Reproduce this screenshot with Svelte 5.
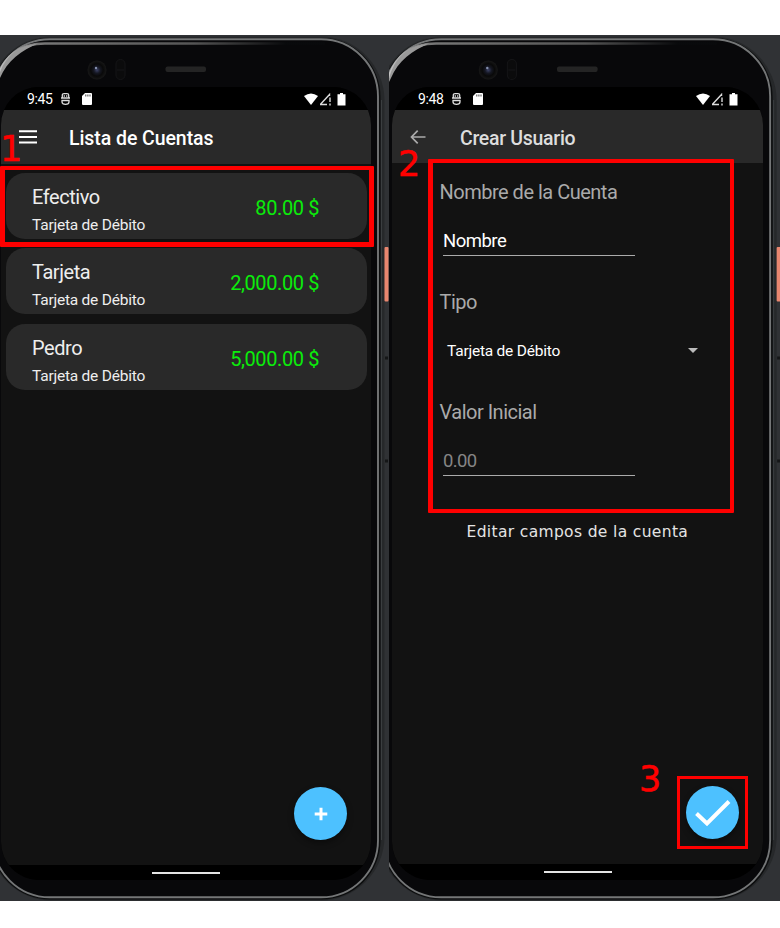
<script>
  const accounts = [
    { name: 'Efectivo', type: 'Tarjeta de Débito', amount: '80.00 $' },
    { name: 'Tarjeta', type: 'Tarjeta de Débito', amount: '2,000.00 $' },
    { name: 'Pedro', type: 'Tarjeta de Débito', amount: '5,000.00 $' }
  ];
</script>

{#snippet body(id)}
  <svg class="hardware" width="391" height="866" viewBox="0 35 391 866" aria-hidden="true">
    <defs>
      <linearGradient id="glow-{id}" x1="0" x2="1" y1="0" y2="0">
        <stop offset="0" stop-color="#c6c6c6" />
        <stop offset=".12" stop-color="#777" />
        <stop offset=".6" stop-color="#555" />
        <stop offset=".88" stop-color="#090a0c" />
      </linearGradient>
      <radialGradient id="lens-{id}">
        <stop offset="0" stop-color="#3c4266" />
        <stop offset=".35" stop-color="#151722" />
        <stop offset=".65" stop-color="#090909" />
        <stop offset="1" stop-color="#171717" />
      </radialGradient>
    </defs>
    <rect x="-12" y="36.5" width="396.500" height="864" rx="64" fill="#26282a" />
    <rect x="-9" y="38" width="389.500" height="861.500" rx="59" fill="#0c0d0e" />
    <rect x="-7" y="39.300" width="385" height="858" rx="57" fill="#08080a" stroke="#747677" stroke-width="1.900" />
    <path d="M-3 80C3 57 19 43.500 45 43.500H325" fill="none" stroke="url(#glow-{id})" stroke-width="2.500" />
    <path d="M-3 84C1 60 15 46 38 43.500C22 50 7 61 0 78Z" fill="#999" />
    <path d="M381.500 100V840" stroke="#3b3e40" />
    <circle cx="97" cy="70" r="9.500" fill="url(#lens-{id})" />
    <circle cx="96" cy="68" r="1.200" fill="#8791ae" />
    <rect x="116" y="59.500" width="9" height="20" rx="4.500" fill="#0b0b0c" stroke="#151517" />
    <path d="M117 70h7" stroke="#171719" />
    <rect x="165.500" y="66.500" width="40.500" height="5.500" rx="2" fill="#242424" />
    <rect x="384.500" y="247" width="4" height="54.500" rx="1" fill="#e9866f" />
    <path d="M385 358h3M385 461h3" stroke="#151617" stroke-width="3" />
  </svg>
{/snippet}

{#snippet statusbar(time)}
  <div class="status">
    <span class="time">{time}</span>
    <svg width="9" height="12" viewBox="0 0 9 12" fill="none" stroke="#ddd" stroke-width="1.300">
      <path d="M1.300 4.500V2Q1.300.7 3 .7H6Q7.700.7 7.700 2V4.500M0 5H9M1 7.500H8V9Q8 11.300 4.500 11.300Q1 11.300 1 9Z" />
      <path d="M3.300 2.300v1.500M5.700 2.300v1.500" />
    </svg>
    <svg class="sd" width="10" height="12" viewBox="0 0 10 12"><path d="M3 0H9Q10 0 10 1V11Q10 12 9 12H1Q0 12 0 11V3Z" fill="#fff" /><path d="M3.800 1.500v2M5.900 1.500v2M8 1.500v2" stroke="#444" /></svg>
    <svg class="signals" width="42" height="13" viewBox="0 0 42 13">
      <path d="M0 3Q7-2 14 3L7 12Z" fill="#fff" />
      <path d="M16 11.500H23M16.500 11.200L25.500 1.500V3" fill="none" stroke="#ddd" stroke-width="1.400" />
      <path d="M26 4.500V9M26 10.500v2" stroke="#ddd" stroke-width="1.400" />
      <path d="M36 0H39V1.200H41.500V12.500H33.500V1.200H36Z" fill="#fff" />
    </svg>
  </div>
{/snippet}

<main>
  <section class="phone">
    {@render body('list')}
    <div class="screen">
      {@render statusbar('9:45')}
      <header>
        <svg class="nav" width="18" height="14" viewBox="0 0 18 14"><path d="M0 1.300H18M0 6.900H18M0 12.500H18" stroke="#fff" stroke-width="2" /></svg>
        <h1>Lista de Cuentas</h1>
      </header>
      <div class="content list">
        {#each accounts as account}
          <article>
            <div>
              <h2>{account.name}</h2>
              <p>{account.type}</p>
            </div>
            <strong>{account.amount}</strong>
          </article>
        {/each}
        <button class="fab" aria-label="Agregar cuenta">
          <svg width="14" height="14" viewBox="0 0 14 14"><path d="M7 .7V13.300M.7 7H13.300" stroke="#fff" stroke-width="3" /></svg>
        </button>
      </div>
      <footer><i></i></footer>
    </div>
    <b class="num one">1</b>
    <div class="mark first"></div>
  </section>

  <section class="phone second">
    {@render body('form')}
    <div class="screen">
      {@render statusbar('9:48')}
      <header>
        <svg class="nav" width="16" height="14" viewBox="0 0 16 14"><path d="M15.500 7H1.500M7.700.7L1.500 7L7.700 13.300" fill="none" stroke="#aaa" stroke-width="1.700" /></svg>
        <h1>Crear Usuario</h1>
      </header>
      <div class="content form">
        <div class="label">Nombre de la Cuenta</div>
        <div class="field">Nombre</div>
        <div class="label">Tipo</div>
        <div class="select">
          <span>Tarjeta de Débito</span>
          <svg width="10" height="5" viewBox="0 0 10 5"><path d="M0 0H10L5 5Z" fill="#bbb" /></svg>
        </div>
        <div class="label">Valor Inicial</div>
        <div class="field empty">0.00</div>
        <div class="caption">Editar campos de la cuenta</div>
        <button class="fab" aria-label="Guardar">
          <svg width="36" height="28" viewBox="0 0 36 28"><path d="M1.500 14.500L12 24.500L34 2.500" fill="none" stroke="#fff" stroke-width="4" /></svg>
        </button>
      </div>
      <footer><i></i></footer>
    </div>
    <b class="num two">2</b>
    <b class="num three">3</b>
    <div class="mark fields"></div>
    <div class="mark save"></div>
  </section>
</main>

<style>
  :global(body) { margin: 0; background: #fff; }
  main {
    box-sizing: border-box;
    width: 780px;
    height: 928px;
    padding: 35px 0 27px;
    display: grid;
    grid-template-columns: 389px 391px;
    overflow: hidden;
    font-family: Roboto, sans-serif;
    color: #fff;
  }
  .phone {
    position: relative;
    overflow: hidden;
    background: #303235;
    padding: 52px 0 0 1px;
  }
  .second { padding-left: 3px; }
  .hardware { position: absolute; left: 0; top: 0; overflow: visible; }
  .second .hardware { left: 2px; transform: scaleX(1.003); transform-origin: left; }
  .screen {
    position: relative;
    width: 370px;
    height: 793px;
    display: flex;
    flex-direction: column;
    border-radius: 38px;
    overflow: hidden;
    background: #000;
  }
  .second .screen { width: 371px; }
  .status {
    flex: 0 0 23px;
    display: flex;
    align-items: center;
    box-sizing: border-box;
    padding: 1px 25px 0 26px;
    background: #000;
  }
  .time { width: 34px; font-size: 14px; letter-spacing: -.35px; }
  .sd { margin-left: 12px; }
  .signals { margin-left: auto; }
  header {
    flex: 0 0 53.500px;
    display: flex;
    align-items: center;
    background: #292929;
    padding-left: 17.500px;
  }
  .second header { flex-basis: 53px; }
  .nav { width: 18px; flex: none; }
  .second .nav { width: 16px; }
  h1 { margin: 3px 0 0 32.500px; font-size: 19.500px; font-weight: 500; letter-spacing: -.07px; }
  .second h1 { margin-left: 34.500px; color: #ddd; letter-spacing: -.3px; }
  .content { position: relative; flex: 1; background: #121212; }
  .list { display: flex; flex-direction: column; gap: 9.500px; padding: 9px 4.500px; }
  article {
    box-sizing: border-box;
    height: 66px;
    border-radius: 19px;
    background: #292929;
    padding: 11px 47.500px 0 26.500px;
    display: flex;
    justify-content: space-between;
  }
  h2 { margin: 0; font-size: 20px; line-height: 26px; font-weight: 400; color: #eee; letter-spacing: -.45px; }
  p { margin: 3px 0 0; font-size: 15.500px; line-height: 24px; color: #eee; letter-spacing: -.22px; }
  strong { margin-top: 11px; font-size: 20px; line-height: 26px; font-weight: 400; color: #0bec0b; letter-spacing: -.4px; }
  .fab {
    position: absolute;
    right: 24px;
    bottom: 24.500px;
    width: 53px;
    height: 53px;
    padding: 0;
    border: 0;
    border-radius: 50%;
    display: grid;
    place-items: center;
    background: #4dc1ff;
    box-shadow: 0 3px 6px #0006;
  }
  .second .fab { bottom: 25px; }
  footer { flex: 0 0 15.500px; display: flex; justify-content: center; background: #000; }
  .second footer { flex-basis: 16px; }
  footer i { width: 68px; height: 2px; margin-top: 7px; background: #e4e4e4; }
  .form { padding: 15.500px 66px 0 47.500px; }
  .label { height: 26px; font-size: 20px; line-height: 26px; color: #aaa; letter-spacing: -.5px; }
  .field {
    box-sizing: border-box;
    width: 192px;
    height: 41px;
    margin: 10px 0 33px 3.500px;
    padding-top: 14px;
    border-bottom: 1px solid #aaa;
    font-size: 18.500px;
    line-height: 24px;
    letter-spacing: -.5px;
  }
  .empty { color: #858585; margin-bottom: 45px; letter-spacing: -.6px; }
  .select {
    height: 46px;
    margin: 13px 1px 25px 7.500px;
    width: 251px;
    display: flex;
    align-items: center;
    justify-content: space-between;
    font-size: 15.500px;
    letter-spacing: -.22px;
  }
  .caption { margin-left: 27px; font: 15.500px/22px "DejaVu Sans", sans-serif; letter-spacing: .35px; color: #e4e4e4; white-space: nowrap; }
  .mark { position: absolute; box-sizing: border-box; border: 4px solid #f00; border-radius: 1px; }
  .first { left: 0; top: 131px; width: 374px; height: 81px; border-width: 4.500px 5px 5px; }
  .fields { left: 39px; top: 124px; width: 306px; height: 354px; border-left-width: 5px; }
  .save { left: 288px; top: 741px; width: 71px; height: 73px; border-width: 3px; border-radius: 0; }
  .num { position: absolute; color: #f00; font: 35px/40px "DejaVu Sans", sans-serif; -webkit-text-stroke: .5px #f00; }
  .one { left: 0; top: 94px; }
  .two { left: 9px; top: 109px; }
  .three { left: 250px; top: 724px; }
</style>
